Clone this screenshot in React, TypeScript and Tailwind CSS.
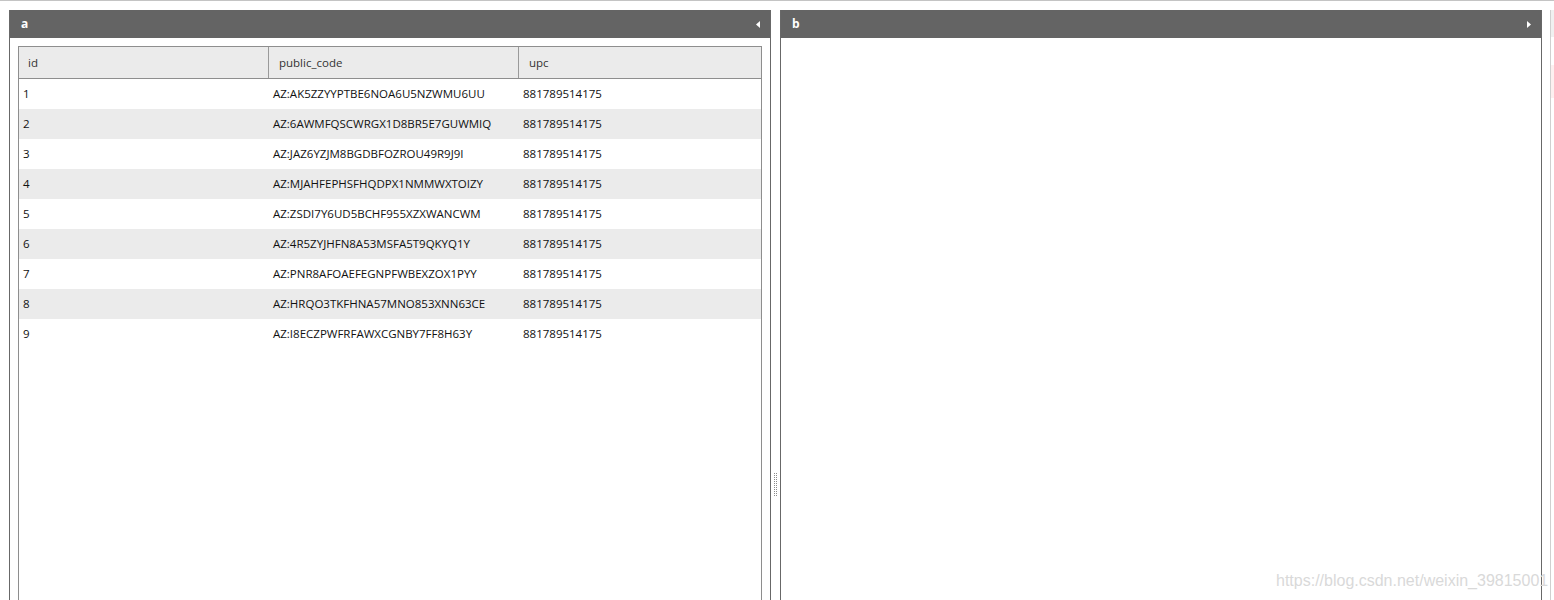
const rows = [
  ["1", "AZ:AK5ZZYYPTBE6NOA6U5NZWMU6UU", "881789514175"],
  ["2", "AZ:6AWMFQSCWRGX1D8BR5E7GUWMIQ", "881789514175"],
  ["3", "AZ:JAZ6YZJM8BGDBFOZROU49R9J9I", "881789514175"],
  ["4", "AZ:MJAHFEPHSFHQDPX1NMMWXTOIZY", "881789514175"],
  ["5", "AZ:ZSDI7Y6UD5BCHF955XZXWANCWM", "881789514175"],
  ["6", "AZ:4R5ZYJHFN8A53MSFA5T9QKYQ1Y", "881789514175"],
  ["7", "AZ:PNR8AFOAEFEGNPFWBEXZOX1PYY", "881789514175"],
  ["8", "AZ:HRQO3TKFHNA57MNO853XNN63CE", "881789514175"],
  ["9", "AZ:I8ECZPWFRFAWXCGNBY7FF8H63Y", "881789514175"],
];

function Arrow({ dir }: { dir: "left" | "right" }) {
  return (
    <svg width="4" height="7" viewBox="0 0 4 7" className="block">
      {dir === "left" ? (
        <polygon points="4,0 4,7 0,3.5" fill="#fff" />
      ) : (
        <polygon points="0,0 0,7 4,3.5" fill="#fff" />
      )}
    </svg>
  );
}

function Panel({ title, dir, children }: { title: string; dir: "left" | "right"; children?: React.ReactNode }) {
  return (
    <div className="flex h-[600px] w-[762px] shrink-0 flex-col border-x border-[#686868]">
      <div className="flex h-[28px] shrink-0 items-center justify-between bg-[#646464] pl-[11px] pr-[10px] text-[12px] font-bold text-white">
        <span>{title}</span>
        <Arrow dir={dir} />
      </div>
      <div className="min-h-0 flex-1 overflow-hidden px-[8px] pt-[8px]">{children}</div>
    </div>
  );
}

function Grip() {
  return (
    <svg width="3" height="23" viewBox="0 0 3 23" className="block">
      {Array.from({ length: 12 }).map((_, i) => (
        <g key={i}>
          <rect x="0" y={i * 2} width="1" height="1" fill="#8a8a8a" />
          <rect x="2" y={i * 2} width="1" height="1" fill="#8a8a8a" />
        </g>
      ))}
    </svg>
  );
}

export default function App() {
  return (
    <div
      className="relative h-[600px] w-[1554px] overflow-hidden bg-white"
      style={{ fontFamily: '"Open Sans", "Noto Sans", sans-serif' }}
    >
      <div className="h-px bg-[#c4c4c4]" />
      <div className="flex pt-[9px] pl-[9px]">
        <Panel title="a" dir="left">
          <div className="h-[600px] border border-[#8e8e8e] text-[11.5px]">
            <div className="grid h-[32px] grid-cols-[250px_250px_1fr] border-b border-[#8e8e8e] bg-[#ebebeb] text-[#333]">
              <div className="flex items-center border-r border-[#9a9a9a] pl-[9px]">id</div>
              <div className="flex items-center border-r border-[#9a9a9a] pl-[10px]">public_code</div>
              <div className="flex items-center pl-[10px]">upc</div>
            </div>
            {rows.map((r, i) => (
              <div
                key={r[0]}
                className={`grid h-[30px] grid-cols-[250px_250px_1fr] items-center text-[#111] ${i % 2 === 1 ? "bg-[#ebebeb]" : "bg-white"}`}
              >
                <div className="pl-[4px]">{r[0]}</div>
                <div className="pl-[4px]">{r[1]}</div>
                <div className="pl-[4px]">{r[2]}</div>
              </div>
            ))}
          </div>
        </Panel>
        <div className="flex w-[9px] shrink-0 justify-center pt-[463px]">
          <Grip />
        </div>
        <Panel title="b" dir="right" />
        <div className="w-[8px] shrink-0" />
        <div className="h-[600px] w-px shrink-0 bg-[#d0d0d0]" />
        <div className="flex w-[4px] shrink-0 flex-col">
          <div className="h-[27px] bg-[#f0f0f0]" />
          <div className="h-[28px] bg-white" />
          <div className="h-[33px] bg-[#fdf0f0]" />
        </div>
      </div>
      <div
        className="absolute left-[1276px] top-[569px] text-[16px] text-[#d9d9d9]"
        style={{ fontFamily: '"Liberation Sans", Arial, sans-serif' }}
      >
        https://blog.csdn.net/weixin_39815001
      </div>
    </div>
  );
}
